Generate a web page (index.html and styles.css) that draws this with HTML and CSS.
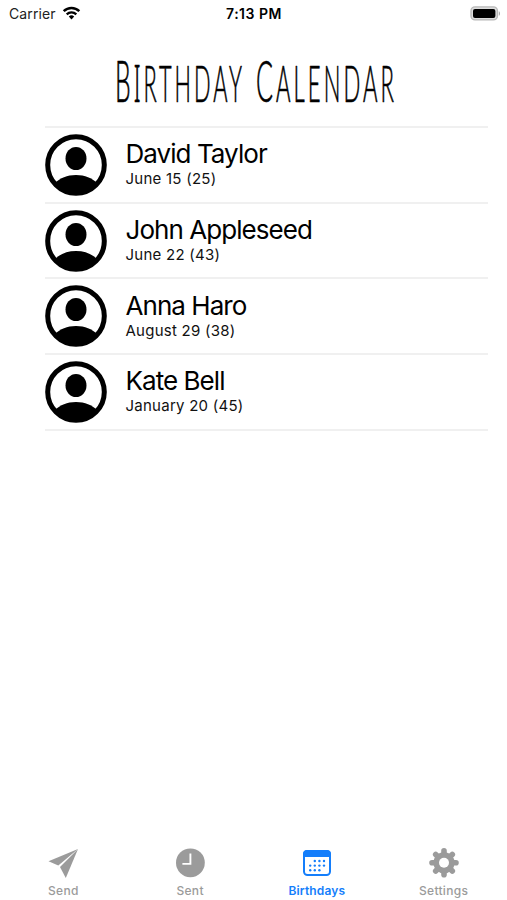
FILE: index.html
```html
<!DOCTYPE html>
<html lang="en">
<head>
    <meta charset="utf-8">
    <title>Birthday Calendar</title>
    <link rel="stylesheet" href="styles.css">
</head>
<body>
    <svg class="symbols" width="0" height="0">
        <symbol id="person" viewBox="0 0 62 62">
            <circle cx="31" cy="31" r="28.3" fill="none" stroke="#000" stroke-width="5"/>
            <ellipse cx="31" cy="24.5" rx="10.5" ry="11.5"/>
            <path d="M10 49C15 44 22 41 31 41s16 3 21 8C47 56 40 60 31 60S15 56 10 49z"/>
        </symbol>
    </svg>

    <header class="status">
        <div class="carrier">
            <span>Carrier</span>
            <svg width="19" height="14" viewBox="0 0 18 14">
                <path d="M1.2 5.1a11.2 11.2 0 0 1 15.6 0" fill="none" stroke="#000" stroke-width="2.5"/>
                <path d="M4.2 8.3a6.9 6.9 0 0 1 9.6 0" fill="none" stroke="#000" stroke-width="2.3"/>
                <path d="M6.3 10.5a3.9 3.9 0 0 1 5.4 0L9 13.4z"/>
            </svg>
        </div>
        <div class="time">7:13 PM</div>
        <div class="battery">
            <svg width="31" height="15" viewBox="0 0 31 15">
                <rect x="1" y=".9" width="26.4" height="13" rx="4" fill="#ddd" stroke="#b8b8b8" stroke-width="1.4"/>
                <rect x="3" y="2.9" width="22.4" height="9" rx="2"/>
                <path d="M28.8 5.2c1.6.6 1.6 4 0 4.6z" fill="#aaa"/>
            </svg>
        </div>
    </header>

    <h1 class="title">
        <svg width="290" height="77" viewBox="0 0 290 77">
            <text x="7" y="53" textLength="130" lengthAdjust="spacingAndGlyphs"><tspan class="cap">B</tspan><tspan class="serif">I</tspan>RTHDAY</text>
            <text x="148" y="53" textLength="141" lengthAdjust="spacingAndGlyphs"><tspan class="cap">C</tspan>ALENDAR</text>
        </svg>
    </h1>

    <ul class="people">
        <li class="person">
            <svg class="avatar"><use href="#person"/></svg>
            <div class="info">
                <div class="name">David Taylor</div>
                <div class="date">June 15 (25)</div>
            </div>
        </li>
        <li class="person">
            <svg class="avatar"><use href="#person"/></svg>
            <div class="info">
                <div class="name">John Appleseed</div>
                <div class="date">June 22 (43)</div>
            </div>
        </li>
        <li class="person">
            <svg class="avatar"><use href="#person"/></svg>
            <div class="info">
                <div class="name">Anna Haro</div>
                <div class="date">August 29 (38)</div>
            </div>
        </li>
        <li class="person">
            <svg class="avatar"><use href="#person"/></svg>
            <div class="info">
                <div class="name">Kate Bell</div>
                <div class="date">January 20 (45)</div>
            </div>
        </li>
    </ul>

    <nav class="tabs">
        <a class="tab">
            <svg width="32" height="32" viewBox="0 0 32 32">
                <path d="M31 2L1.5 14.3l9.8 4.2z"/>
                <path d="M31 2L13 20l5.8 11z"/>
            </svg>
            <span>Send</span>
        </a>
        <a class="tab">
            <svg width="32" height="32" viewBox="0 0 32 32">
                <circle cx="16.4" cy="15.8" r="14.4"/>
                <path d="M16.4 6.5v10.4H8.4" fill="none" stroke="#fff" stroke-width="1.9"/>
            </svg>
            <span>Sent</span>
        </a>
        <a class="tab active">
            <svg width="32" height="32" viewBox="0 0 32 32">
                <rect x="3" y="4" width="26" height="24" rx="3.5" fill="none" stroke="currentColor" stroke-width="2"/>
                <path d="M2 10V7a4 4 0 0 1 4-4h20a4 4 0 0 1 4 4v3z"/>
                <g>
                    <circle cx="13.8" cy="14" r="1.2"/><circle cx="18.4" cy="14" r="1.2"/><circle cx="23" cy="14" r="1.2"/>
                    <circle cx="9.2" cy="18.6" r="1.2"/><circle cx="13.8" cy="18.6" r="1.2"/><circle cx="18.4" cy="18.6" r="1.2"/><circle cx="23" cy="18.6" r="1.2"/>
                    <circle cx="9.2" cy="23.2" r="1.2"/><circle cx="13.8" cy="23.2" r="1.2"/><circle cx="18.4" cy="23.2" r="1.2"/>
                </g>
            </svg>
            <span>Birthdays</span>
        </a>
        <a class="tab">
            <svg width="32" height="32" viewBox="0 0 32 32">
                <g stroke="currentColor" stroke-width="5.6" stroke-linecap="round">
                    <path d="M16 3.8v24M4 15.8h24M7.7 7.5l16.6 16.6M24.3 7.5L7.7 24.1"/>
                </g>
                <circle cx="16" cy="15.8" r="10.6"/>
                <circle cx="16" cy="15.8" r="5" fill="#fff"/>
            </svg>
            <span>Settings</span>
        </a>
    </nav>
</body>
</html>
```
FILE: styles.css
```css
* {
    box-sizing: border-box;
}

body {
    margin: 0;
    height: 900px;
    display: flex;
    flex-direction: column;
    background-color: #fff;
    color: #000;
    font-family: Inter, "Liberation Sans", sans-serif;
}

.symbols {
    display: none;
}

.status {
    display: grid;
    grid-template-columns: 1fr 1fr 1fr;
    align-items: center;
    height: 28px;
    padding: 0 6px 2px 9px;
    font-size: 14px;
}

.carrier {
    display: flex;
    align-items: center;
    gap: 6px;
    color: #222;
    letter-spacing: 0.1px;
}

.time {
    text-align: center;
    font-weight: 600;
    letter-spacing: 0.5px;
    padding-right: 2px;
}

.battery {
    display: flex;
    justify-content: flex-end;
}

.title {
    margin: 21px 0 0;
    height: 77px;
    text-align: center;
    font-weight: 300;
    padding-right: 2px;
}

.title svg {
    display: inline-block;
    overflow: visible;
}

/* narrow hand-lettered look */
.title text {
    font-family: Lato, sans-serif;
    font-size: 51px;
    font-weight: 300;
    letter-spacing: 7px;
    stroke: #000;
    stroke-width: 0.7px;
    stroke-linejoin: round;
}

.title .cap {
    font-size: 58px;
}

.title .serif {
    font-family: "Noto Sans", sans-serif;
}

.people {
    list-style: none;
    margin: 0 19px 0 45px;
    padding: 0;
    border-top: 2px solid #f0f0f0;
}

.person {
    display: flex;
    align-items: center;
    gap: 19px;
    height: 75.7px;
    border-bottom: 2px solid #f0f0f0;
}

.avatar {
    width: 62px;
    height: 62px;
    margin-left: -0.5px;
}

.info {
    padding-bottom: 2px;
}

.name {
    font-size: 26px;
    line-height: 30px;
    letter-spacing: -0.95px;
}

.date {
    font-size: 15px;
    line-height: 19px;
    letter-spacing: 0.25px;
    color: #111;
}

.tabs {
    display: grid;
    grid-template-columns: repeat(4, 1fr);
    margin-top: auto;
    height: 53px;
}

.tab {
    display: flex;
    flex-direction: column;
    align-items: center;
    color: #9b9b9b;
    font-size: 12px;
    font-weight: 500;
    line-height: 15px;
    letter-spacing: 0.3px;
}

.tab svg {
    fill: currentColor;
    margin-bottom: 4px;
}

.active {
    color: #147efb;
    font-weight: 600;
    letter-spacing: 0.15px;
}
```
